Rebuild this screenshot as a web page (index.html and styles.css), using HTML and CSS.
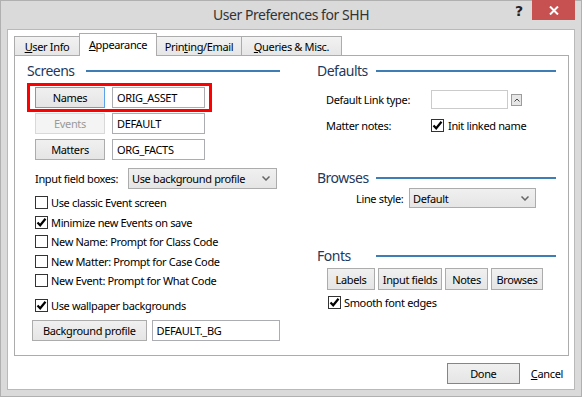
FILE: index.html
```html
<!DOCTYPE html>
<html>
<head>
<meta charset="utf-8">
<link rel="stylesheet" href="styles.css">
</head>
<body>
<div class="window">
  <div class="titlebar">
    <div class="title">User Preferences for SHH</div>
    <div class="controls">
      <div class="help">?</div>
      <div class="close"><svg width="10" height="9" viewBox="0 0 10 9"><path d="M1 0.5 L9 8.5 M9 0.5 L1 8.5" stroke="#fff" stroke-width="2"/></svg></div>
    </div>
  </div>
  <div class="client">
    <div class="tabs">
      <div class="tab tab-user"><span><u>U</u>ser Info</span></div>
      <div class="tab tab-app active"><span><u>A</u>ppearance</span></div>
      <div class="tab tab-print"><span>Prin<u>t</u>ing/Email</span></div>
      <div class="tab tab-queries"><span><u>Q</u>ueries &amp; Misc.</span></div>
    </div>
    <div class="panel">
      <div class="col col-left">
        <div class="gh"><span class="gh-text">Screens</span><span class="gh-line"></span></div>
        <div class="row row-names">
          <button class="btn btn-screen focus">Names</button>
          <div class="field field-screen">ORIG_ASSET</div>
          <div class="highlight"></div>
        </div>
        <div class="row row-next">
          <button class="btn btn-screen disabled">Events</button>
          <div class="field field-screen">DEFAULT</div>
        </div>
        <div class="row row-next">
          <button class="btn btn-screen">Matters</button>
          <div class="field field-screen">ORG_FACTS</div>
        </div>
        <div class="row row-input">
          <span class="lbl lbl-input">Input field boxes:</span>
          <div class="select select-input"><span>Use background profile</span><svg class="chev" width="8" height="5" viewBox="0 0 8 5"><path d="M0.5 0.5 L4 4 L7.5 0.5" fill="none" stroke="#666" stroke-width="1.5"/></svg></div>
        </div>
        <div class="checklist">
          <div class="cbrow"><span class="cb"></span><span class="cbtext">Use classic Event screen</span></div>
          <div class="cbrow"><span class="cb"><svg width="11" height="11" viewBox="0 0 11 11"><path d="M1.5 5.5 L4.2 8.3 L9.5 1.8" fill="none" stroke="#000" stroke-width="2.2"/></svg></span><span class="cbtext">Minimize new Events on save</span></div>
          <div class="cbrow"><span class="cb"></span><span class="cbtext">New Name: Prompt for Class Code</span></div>
          <div class="cbrow"><span class="cb"></span><span class="cbtext">New Matter: Prompt for Case Code</span></div>
          <div class="cbrow"><span class="cb"></span><span class="cbtext">New Event: Prompt for What Code</span></div>
        </div>
        <div class="cbrow cbrow-wall"><span class="cb"><svg width="11" height="11" viewBox="0 0 11 11"><path d="M1.5 5.5 L4.2 8.3 L9.5 1.8" fill="none" stroke="#000" stroke-width="2.2"/></svg></span><span class="cbtext">Use wallpaper backgrounds</span></div>
        <div class="row row-bg">
          <button class="btn btn-bg">Background profile</button>
          <div class="field field-bg">DEFAULT._BG</div>
        </div>
      </div>
      <div class="col col-right">
        <div class="gh"><span class="gh-text">Defaults</span><span class="gh-line"></span></div>
        <div class="row row-link">
          <span class="lbl lbl-def">Default Link type:</span>
          <div class="field field-link"></div>
          <div class="spin"><svg width="6" height="4" viewBox="0 0 6 4"><path d="M0.5 3.5 L3 1 L5.5 3.5" fill="none" stroke="#444" stroke-width="1"/></svg></div>
        </div>
        <div class="row row-matter">
          <span class="lbl lbl-def">Matter notes:</span>
          <span class="cb"><svg width="11" height="11" viewBox="0 0 11 11"><path d="M1.5 5.5 L4.2 8.3 L9.5 1.8" fill="none" stroke="#000" stroke-width="2.2"/></svg></span>
          <span class="cbtext">Init linked name</span>
        </div>
        <div class="gh gh-browses"><span class="gh-text">Browses</span><span class="gh-line"></span></div>
        <div class="row row-line">
          <span class="lbl lbl-line">Line style:</span>
          <div class="select select-line"><span>Default</span><svg class="chev" width="8" height="5" viewBox="0 0 8 5"><path d="M0.5 0.5 L4 4 L7.5 0.5" fill="none" stroke="#666" stroke-width="1.5"/></svg></div>
        </div>
        <div class="gh gh-fonts"><span class="gh-text">Fonts</span><span class="gh-line"></span></div>
        <div class="row row-fontbtns">
          <button class="btn btn-labels">Labels</button>
          <button class="btn btn-inputs">Input fields</button>
          <button class="btn btn-notes">Notes</button>
          <button class="btn btn-browses">Browses</button>
        </div>
        <div class="cbrow cbrow-smooth"><span class="cb"><svg width="11" height="11" viewBox="0 0 11 11"><path d="M1.5 5.5 L4.2 8.3 L9.5 1.8" fill="none" stroke="#000" stroke-width="2.2"/></svg></span><span class="cbtext">Smooth font edges</span></div>
      </div>
    </div>
    <div class="footer">
      <button class="btn btn-done">Done</button>
      <span class="link"><u>C</u>ancel</span>
    </div>
  </div>
</div>
</body>
</html>
```
FILE: styles.css
```css
html, body {
  margin: 0;
  padding: 0;
  background: #dadada;
}
body {
  font-family: "Noto Sans", "Open Sans", sans-serif;
  font-size: 11px;
  letter-spacing: -0.35px;
  color: #000;
}
.window {
  width: 582px;
  height: 397px;
  box-sizing: border-box;
  background: #dadada;
  border: 1px solid #b0b0b0;
  display: flex;
  flex-direction: column;
}
.titlebar {
  height: 28px;
  display: grid;
  grid-template-columns: 1fr auto 1fr;
  align-items: center;
}
.title {
  grid-column: 2;
  font-size: 14px;
  letter-spacing: -0.45px;
  color: #333;
  line-height: 28px;
}
.controls {
  grid-column: 3;
  justify-self: end;
  align-self: start;
  display: flex;
}
.help {
  width: 14px;
  height: 20px;
  margin-right: 6px;
  text-align: center;
  font-weight: bold;
  font-size: 14px;
  line-height: 20px;
  color: #222;
  font-family: "DejaVu Sans", sans-serif;
}
.close {
  width: 43px;
  height: 20px;
  margin-top: -1px;
  margin-right: 6px;
  background: #c75050;
  display: flex;
  align-items: center;
  justify-content: center;
}
.client {
  height: 361px;
  box-sizing: border-box;
  margin: 0 6px;
  border: 1px solid #b9b9b9;
  background: #fff;
  padding: 3px 5px 0 6px;
  display: flex;
  flex-direction: column;
}
.tabs {
  display: flex;
  align-items: flex-end;
  height: 22px;
}
.tab {
  height: 19px;
  box-sizing: border-box;
  border: 1px solid #acacac;
  border-bottom: 0;
  background: linear-gradient(#f2f2f2, #e6e6e6);
  display: flex;
  align-items: center;
  justify-content: center;
  margin-left: -1px;
}
.tab-user { width: 66px; margin-left: 0; }
.tab-app { width: 78px; }
.tab-print { width: 86px; }
.tab-queries { width: 101px; }
.tab.active {
  height: 23px;
  margin-bottom: -1px;
  background: #fff;
  position: relative;
  z-index: 1;
  padding-bottom: 2px;
}
.panel {
  height: 301px;
  box-sizing: border-box;
  border: 1px solid #acacac;
  padding: 6px 12px 0;
  display: grid;
  grid-template-columns: 253px 239px;
  column-gap: 37px;
  align-items: start;
}
.col {
  display: flex;
  flex-direction: column;
}
.gh {
  display: flex;
  align-items: center;
  height: 18px;
}
.gh-text {
  width: 59px;
  font-size: 14px;
  letter-spacing: -0.5px;
  line-height: 18px;
  color: #1e395b;
}
.gh-line {
  flex: 1;
  height: 2px;
  background: #3f7db5;
}
.row {
  display: flex;
  align-items: center;
  height: 21px;
}
.btn {
  font: inherit;
  letter-spacing: inherit;
  color: #000;
  padding: 0;
  margin: 0;
  box-sizing: border-box;
  border: 1px solid #acacac;
  background: linear-gradient(#f0f0f0, #e5e5e5);
  height: 21px;
  display: flex;
  align-items: center;
  justify-content: center;
}
.btn.focus {
  border-color: #5ba3e8;
}
.btn.disabled {
  border-color: #d9d9d9;
  background: #f4f4f4;
  color: #9a9a9a;
}
.field {
  box-sizing: border-box;
  height: 21px;
  border: 1px solid #abadb3;
  background: #fff;
  padding-left: 4px;
  display: flex;
  align-items: center;
}
.row-names {
  margin-top: 7px;
  position: relative;
}
.row-next { margin-top: 5px; }
.btn-screen { margin-left: 8px; width: 70px; }
.field-screen { margin-left: 7px; width: 93px; }
.highlight {
  position: absolute;
  left: 0;
  top: -4px;
  width: 185px;
  height: 29px;
  box-sizing: border-box;
  border: 3px solid #f00;
  pointer-events: none;
}
.row-input { margin-top: 8px; }
.lbl-input { margin-left: 8px; width: 93px; }
.select {
  box-sizing: border-box;
  height: 21px;
  border: 1px solid #acacac;
  background: linear-gradient(#f0f0f0, #e5e5e5);
  padding: 0 6px 0 3px;
  display: flex;
  align-items: center;
  justify-content: space-between;
}
.select-input { width: 149px; }
.checklist {
  margin-top: 4px;
  display: flex;
  flex-direction: column;
}
.cbrow {
  display: flex;
  align-items: center;
  height: 19.5px;
  margin-left: 8px;
}
.cb {
  width: 13px;
  height: 13px;
  box-sizing: border-box;
  border: 1px solid #333;
  background: #fff;
  display: flex;
  align-items: center;
  justify-content: center;
  flex: none;
}
.cbtext { margin-left: 3px; }
.cbrow-wall { margin-top: 5.5px; }
.row-bg { margin-top: 4.25px; }
.btn-bg { margin-left: 5px; width: 115px; }
.field-bg { margin-left: 5px; width: 129px; }

.row-link { margin-top: 10px; height: 19px; }
.lbl-def { margin-left: 9px; width: 105px; flex: none; }
.field-link { width: 77px; height: 19px; border-color: #cbcbcb; }
.spin {
  margin-left: 3px;
  width: 11px;
  height: 12px;
  box-sizing: border-box;
  border: 1px solid #9c9c9c;
  background: #e6e6e6;
  display: flex;
  align-items: center;
  justify-content: center;
}
.row-matter { margin-top: 6px; height: 20px; }
.row-matter .cbtext { margin-left: 4px; }
.gh-browses { margin-top: 34px; }
.row-line { margin-top: 1px; height: 20px; }
.lbl-line { margin-left: 39px; width: 53px; }
.select-line { width: 127px; height: 20px; }
.gh-fonts { margin-top: 39px; }
.row-fontbtns { margin-top: 3px; height: 22px; gap: 3px; padding-left: 10px; }
.row-fontbtns .btn { height: 22px; }
.btn-labels { width: 48px; }
.btn-inputs { width: 64px; }
.btn-notes { width: 43px; }
.btn-browses { width: 52px; }
.cbrow-smooth { margin-top: 2px; height: 20px; margin-left: 11px; }

.footer {
  display: flex;
  justify-content: flex-end;
  align-items: center;
  padding-top: 7px;
  padding-right: 6px;
  gap: 11px;
}
.btn-done {
  width: 73px;
  height: 21px;
  border-color: #3c97e6;
}
.link { line-height: 21px; }
```
